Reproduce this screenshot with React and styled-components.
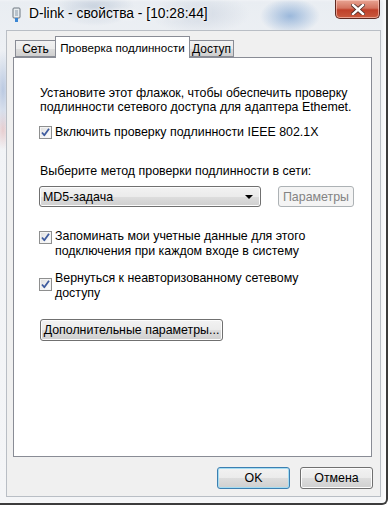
import React from "react";
import styled, { createGlobalStyle } from "styled-components";

const GlobalStyle = createGlobalStyle`
  html, body {
    margin: 0;
    padding: 0;
    width: 388px;
    height: 505px;
    overflow: hidden;
    background: #ffffff;
  }
  #root {
    width: 388px;
    height: 505px;
  }
`;

const Window = styled.div`
  box-sizing: border-box;
  width: 388px;
  height: 505px;
  display: flex;
  flex-direction: column;
  font-family: "Liberation Sans", Arial, sans-serif;
  font-size: 12.4px;
  color: #000;
  border-right: 2px solid #3c3c3c;
  border-bottom: 2px solid #3c3c3c;
  border-bottom-right-radius: 6px;
  background:
    radial-gradient(ellipse 40px 18px at 95px 8px, rgba(170, 185, 205, 0.55), transparent),
    radial-gradient(ellipse 50px 20px at 200px 14px, rgba(190, 200, 215, 0.5), transparent),
    radial-gradient(ellipse 30px 18px at 290px 16px, rgba(90, 140, 200, 0.55), transparent),
    radial-gradient(ellipse 10px 40px at 3px 90px, rgba(120, 150, 200, 0.45), transparent),
    radial-gradient(ellipse 8px 20px at 3px 130px, rgba(200, 90, 90, 0.25), transparent),
    linear-gradient(180deg, #e9edf2 0%, #f1f3f6 20%, #f4f5f7 100%);
  box-shadow: inset -3px 0 3px rgba(255, 255, 255, 0.7);
`;

const TitleBar = styled.div`
  height: 30px;
  flex: none;
  display: flex;
  align-items: flex-start;
  padding-left: 12px;
  position: relative;
`;

const TitleIcon = styled.svg`
  margin-top: 7px;
  width: 9px;
  height: 16px;
`;

const TitleText = styled.div`
  margin-top: 6px;
  margin-left: 8px;
  font-size: 13.8px;
  color: #000;
  text-shadow: 0 0 6px #fff, 0 0 3px #fff;
`;

const CloseButton = styled.div`
  position: absolute;
  right: 6px;
  top: 0;
  width: 45px;
  height: 19px;
  box-sizing: border-box;
  border: 1px solid #5e2a22;
  border-top: none;
  border-radius: 0 0 5px 5px;
  background: linear-gradient(180deg, #e8a493 0%, #d47460 45%, #c0402a 55%, #c95a3e 100%);
  box-shadow: inset 0 0 0 1px rgba(255, 210, 200, 0.6);
  display: flex;
  align-items: center;
  justify-content: center;
`;

const Client = styled.div`
  flex: 1;
  margin: 0 5px 6px 6px;
  background: #f0f0f0;
  border: 1px solid #b9bec5;
  display: flex;
  flex-direction: column;
  padding: 5px 8px 7px 6px;
`;

const TabStrip = styled.div`
  display: flex;
  align-items: flex-end;
  height: 21px;
  padding-left: 2px;
  position: relative;
  z-index: 1;
`;

const Tab = styled.div`
  box-sizing: border-box;
  height: ${(p) => (p.$active ? "22px" : "17px")};
  width: ${(p) => p.$w}px;
  margin-bottom: ${(p) => (p.$active ? "-1px" : "0")};
  padding-top: ${(p) => (p.$active ? "3px" : "1px")};
  border: 1px solid #898c95;
  border-bottom: ${(p) => (p.$active ? "none" : "1px solid #898c95")};
  margin-left: ${(p) => (p.$first ? "0" : "-1px")};
  background: ${(p) =>
    p.$active ? "#ffffff" : "linear-gradient(180deg, #f2f2f2 0%, #ebebeb 50%, #dddddd 51%, #cfcfcf 100%)"};
  font-size: ${(p) => (p.$active ? "11.6px" : "12px")};
  text-align: center;
  white-space: nowrap;
  line-height: 15px;
`;

const Panel = styled.div`
  flex: 1;
  background: #ffffff;
  border: 1px solid #898c95;
  padding: 28px 0 0 26px;
  display: flex;
  flex-direction: column;
`;

const Paragraph = styled.div`
  line-height: 14px;
  margin-bottom: 11px;
`;

const CheckRow = styled.label`
  display: flex;
  align-items: flex-start;
  gap: 3px;
  line-height: 15px;
  margin-bottom: ${(p) => p.$mb || 0}px;
  margin-left: -1px;
`;

const Box = styled.span`
  flex: none;
  box-sizing: border-box;
  width: 13px;
  height: 13px;
  margin-top: ${(p) => p.$mt || 1}px;
  border: 1px solid #8e8f8f;
  background: linear-gradient(135deg, #dcdcdc 0%, #f4f4f4 60%, #ffffff 100%);
  box-shadow: inset 0 0 0 1px #f4f4f4;
  display: flex;
  align-items: center;
  justify-content: center;
`;

const Label = styled.div`
  margin-top: 24px;
  margin-bottom: 7px;
  line-height: 15px;
`;

const ComboRow = styled.div`
  display: flex;
  align-items: center;
  gap: 17px;
  margin-left: -1px;
  margin-bottom: 22px;
`;

const Combo = styled.div`
  box-sizing: border-box;
  width: 222px;
  height: 21px;
  border: 1px solid #707070;
  border-radius: 3px;
  background: linear-gradient(180deg, #f2f2f2 0%, #ebebeb 50%, #dddddd 51%, #cfcfcf 100%);
  box-shadow: inset 0 0 0 1px #fcfcfc;
  display: flex;
  align-items: center;
  justify-content: space-between;
  padding: 0 7px 0 3px;
`;

const Arrow = styled.span`
  width: 0;
  height: 0;
  border-left: 4px solid transparent;
  border-right: 4px solid transparent;
  border-top: 4px solid #000;
`;

const Button = styled.div`
  box-sizing: border-box;
  width: ${(p) => p.$w}px;
  height: ${(p) => p.$h || 21}px;
  border: 1px solid ${(p) => (p.$disabled ? "#adb2b5" : p.$default ? "#3c7fb1" : "#707070")};
  border-radius: 3px;
  background: ${(p) =>
    p.$disabled
      ? "#f4f4f4"
      : "linear-gradient(180deg, #f2f2f2 0%, #ebebeb 50%, #dddddd 51%, #cfcfcf 100%)"};
  box-shadow: inset 0 0 0 1px ${(p) => (p.$disabled ? "#f4f4f4" : p.$default ? "#a4dcf2" : "#fcfcfc")};
  color: ${(p) => (p.$disabled ? "#838383" : "#000")};
  display: flex;
  align-items: center;
  justify-content: center;
  white-space: nowrap;
`;

const Spacer = styled.div`
  height: ${(p) => p.$h}px;
  flex: none;
`;

const Footer = styled.div`
  display: flex;
  justify-content: flex-end;
  gap: 10px;
  padding-top: 10px;
  margin-right: -1px;
`;

const Check = ({ mt }) => (
  <Box $mt={mt}>
    <svg width="9" height="9" viewBox="0 0 9 9">
      <path d="M1 4.5 L3.3 7.3 L8 0.8" fill="none" stroke="#3e5b9e" strokeWidth="1.8" strokeLinejoin="round" />
    </svg>
  </Box>
);

export default function App() {
  return (
    <>
      <GlobalStyle />
      <Window>
        <TitleBar>
          <TitleIcon viewBox="0 0 9 16">
            <rect x="1" y="1" width="7" height="10" rx="1" fill="#e8ecef" stroke="#6d7780" />
            <rect x="3" y="3" width="3" height="6" fill="#b8c2cb" />
            <rect x="3" y="11" width="3" height="4" fill="#3a86d4" />
          </TitleIcon>
          <TitleText>D-link - свойства - [10:28:44]</TitleText>
          <CloseButton>
            <svg width="14" height="11" viewBox="0 0 14 11">
              <path d="M2 1 L12 10 M12 1 L2 10" stroke="#4a2a26" strokeWidth="4" strokeLinecap="square" />
              <path d="M2 1 L12 10 M12 1 L2 10" stroke="#ffffff" strokeWidth="2.4" strokeLinecap="square" />
            </svg>
          </CloseButton>
        </TitleBar>
        <Client>
          <TabStrip>
            <Tab $first $w={41}>Сеть</Tab>
            <Tab $active $w={135}>Проверка подлинности</Tab>
            <Tab $w={45}>Доступ</Tab>
          </TabStrip>
          <Panel>
            <Paragraph>
              Установите этот флажок, чтобы обеспечить проверку
              <br />
              подлинности сетевого доступа для адаптера Ethemet.
            </Paragraph>
            <CheckRow>
              <Check />
              <span>Включить проверку подлинности IEEE 802.1X</span>
            </CheckRow>
            <Label>Выберите метод проверки подлинности в сети:</Label>
            <ComboRow>
              <Combo>
                <span>MD5-задача</span>
                <Arrow />
              </Combo>
              <Button $w={76} $disabled>
                Параметры
              </Button>
            </ComboRow>
            <CheckRow $mb={12}>
              <Check mt={2} />
              <span>
                Запоминать мои учетные данные для этого
                <br />
                подключения при каждом входе в систему
              </span>
            </CheckRow>
            <CheckRow>
              <Check mt={7} />
              <span>
                Вернуться к неавторизованному сетевому
                <br />
                доступу
              </span>
            </CheckRow>
            <Spacer $h={18} />
            <Button $w={183} $h={22}>
              Дополнительные параметры...
            </Button>
          </Panel>
          <Footer>
            <Button $w={73} $h={22} $default>
              OK
            </Button>
            <Button $w={73} $h={22}>
              Отмена
            </Button>
          </Footer>
        </Client>
      </Window>
    </>
  );
}
